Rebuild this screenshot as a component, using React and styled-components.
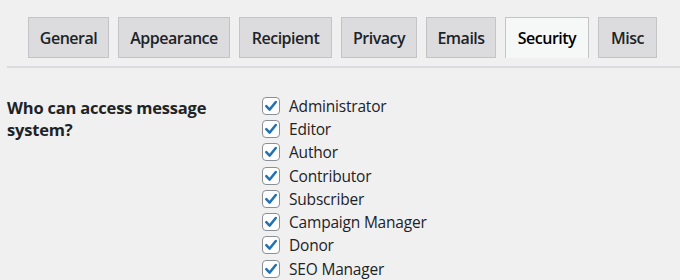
import React from "react";
import styled, { createGlobalStyle } from "styled-components";

const GlobalStyle = createGlobalStyle`
  html, body {
    margin: 0;
    padding: 0;
    background: #f0f0f1;
  }
  body {
    font-family: "Open Sans", "Liberation Sans", sans-serif;
    color: #1d2327;
  }
`;

const Page = styled.div`
  width: 680px;
  height: 280px;
  overflow: hidden;
  padding-left: 7px;
  box-sizing: border-box;
`;

const TabBar = styled.div`
  display: flex;
  gap: 9px;
  padding: 17px 0 0 21px;
  height: 68px;
  box-sizing: border-box;
  border-bottom: 2px solid #dcdcde;
`;

const Tab = styled.div`
  width: ${(p) => p.$w}px;
  height: 41px;
  box-sizing: border-box;
  display: flex;
  align-items: center;
  justify-content: center;
  font-size: 16px;
  font-weight: 600;
  letter-spacing: -0.5px;
  color: ${(p) => (p.$active ? "#000" : "#1d2327")};
  background: ${(p) => (p.$active ? "#f6f7f7" : "#dcdcde")};
  border: 1px solid #c3c4c7;
  border-bottom: ${(p) => (p.$active ? "none" : "1px solid #c3c4c7")};
`;

const FormRow = styled.div`
  display: grid;
  grid-template-columns: 255px 1fr;
  padding-top: 26px;
`;

const Label = styled.div`
  font-size: 16.5px;
  font-weight: 700;
  line-height: 22px;
  width: 210px;
  letter-spacing: -0.2px;
  padding-top: 3px;
`;

const List = styled.div`
  display: flex;
  flex-direction: column;
`;

const Option = styled.label`
  display: flex;
  align-items: center;
  gap: 9px;
  height: 23.3px;
  font-size: 15.5px;
  letter-spacing: -0.2px;
  color: #1d2327;
`;

const Box = styled.span`
  width: 18px;
  height: 18px;
  box-sizing: border-box;
  border: 1px solid #8c8f94;
  border-radius: 4px;
  background: #fff;
  display: flex;
  align-items: center;
  justify-content: center;
`;

const tabs = [
  { name: "General", w: 81 },
  { name: "Appearance", w: 112 },
  { name: "Recipient", w: 93 },
  { name: "Privacy", w: 76 },
  { name: "Emails", w: 70 },
  { name: "Security", w: 84 },
  { name: "Misc", w: 59 },
];

const roles = [
  "Administrator",
  "Editor",
  "Author",
  "Contributor",
  "Subscriber",
  "Campaign Manager",
  "Donor",
  "SEO Manager",
];

function Check() {
  return (
    <svg width="14" height="14" viewBox="0 0 14 14">
      <path d="M2.3 7.2 L5.6 10.6 L11.8 3" fill="none" stroke="#2271b1" strokeWidth="2.5" strokeLinecap="round" strokeLinejoin="round" />
    </svg>
  );
}

export default function App() {
  return (
    <Page>
      <GlobalStyle />
      <TabBar>
        {tabs.map((t) => (
          <Tab key={t.name} $w={t.w} $active={t.name === "Security"}>
            {t.name}
          </Tab>
        ))}
      </TabBar>
      <FormRow>
        <Label>Who can access message system?</Label>
        <List>
          {roles.map((r) => (
            <Option key={r}>
              <Box>
                <Check />
              </Box>
              {r}
            </Option>
          ))}
        </List>
      </FormRow>
    </Page>
  );
}
